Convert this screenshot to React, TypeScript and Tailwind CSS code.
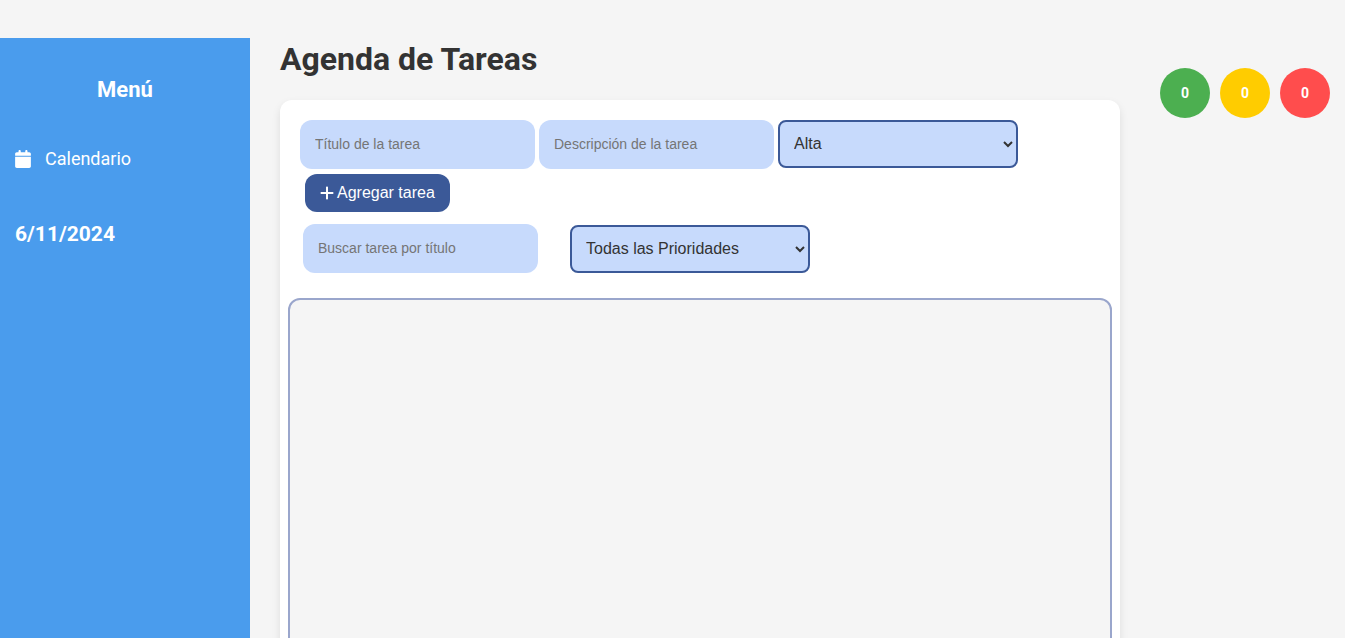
import { useState } from "react";
import { FaPlus } from "react-icons/fa6";

const fieldClass =
  "h-[49px] w-[235px] rounded-xl bg-[#c7dafc] px-[15px] pb-0.5 text-sm text-[#333] placeholder:text-[#757575] outline-none";
const selectClass =
  "h-12 w-60 rounded-lg border-2 border-[#3b5998] bg-[#c7dafc] px-2.5 pb-px text-base text-[#333] outline-none";

const counters = [
  { label: "Prioridad baja", color: "bg-[#4caf50]", count: 0 },
  { label: "Prioridad media", color: "bg-[#ffcc00]", count: 0 },
  { label: "Prioridad alta", color: "bg-[#ff4d4d]", count: 0 },
];

function CalendarIcon() {
  return (
    <svg viewBox="0 0 448 512" className="h-[18px] w-4 shrink-0" fill="currentColor" aria-hidden="true">
      <path d="M96 32C96 14.33 110.3 0 128 0s32 14.33 32 32v32h128V32c0-17.67 14.3-32 32-32s32 14.33 32 32v32h48c26.5 0 48 21.49 48 48v48H0v-48c0-26.51 21.49-48 48-48h48V32zM448 464c0 26.5-21.5 48-48 48H48c-26.51 0-48-21.5-48-48V192h448v272z" />
    </svg>
  );
}

function Sidebar() {
  return (
    <aside className="w-[250px] shrink-0 bg-[#4a9ced] px-[15px] pt-9 text-white">
      <h2 className="text-center text-[22px] leading-8 font-bold">Menú</h2>
      <nav className="mt-10">
        <a href="#calendario" className="flex items-center gap-3.5 text-lg leading-[26px]">
          <CalendarIcon />
          Calendario
        </a>
      </nav>
      <p className="mt-[46px] text-[21px] leading-8 font-bold">6/11/2024</p>
    </aside>
  );
}

export default function App() {
  const [title, setTitle] = useState("");
  const [description, setDescription] = useState("");
  const [search, setSearch] = useState("");

  return (
    <div className="flex h-screen overflow-hidden bg-[#f5f5f5] pt-[38px] font-['Roboto',sans-serif]">
      <Sidebar />
      <main className="min-w-0 flex-1 px-[30px]">
        <h1 className="text-[32px] leading-[42px] font-bold text-[#333]">Agenda de Tareas</h1>
        <section className="mt-5 rounded-xl bg-white px-2 pt-5 pb-5 font-['Liberation_Sans',sans-serif] shadow-[0_4px_8px_rgba(0,0,0,0.1)]">
          <form className="flex flex-wrap gap-x-1 gap-y-[5px] px-3" onSubmit={(e) => e.preventDefault()}>
            <input
              type="text"
              aria-label="Título de la tarea"
              placeholder="Título de la tarea"
              className={fieldClass}
              value={title}
              onChange={(e) => setTitle(e.target.value)}
            />
            <input
              type="text"
              aria-label="Descripción de la tarea"
              placeholder="Descripción de la tarea"
              className={fieldClass}
              value={description}
              onChange={(e) => setDescription(e.target.value)}
            />
            <select aria-label="Prioridad" className={selectClass}>
              <option>Alta</option>
              <option>Media</option>
              <option>Baja</option>
            </select>
            <div className="w-full px-[5px]">
              <button
                type="submit"
                className="flex h-[38px] items-center gap-[3px] rounded-xl bg-[#3b5998] px-[15px] text-base text-white"
              >
                <FaPlus className="h-4 w-3.5" aria-hidden="true" />
                Agregar tarea
              </button>
            </div>
          </form>
          <div className="mt-3 flex flex-wrap items-end gap-x-8 px-[15px]">
            <input
              type="text"
              aria-label="Buscar tarea por título"
              placeholder="Buscar tarea por título"
              className={fieldClass}
              value={search}
              onChange={(e) => setSearch(e.target.value)}
            />
            <select aria-label="Filtrar por prioridad" className={selectClass}>
              <option>Todas las Prioridades</option>
              <option>Alta</option>
              <option>Media</option>
              <option>Baja</option>
            </select>
          </div>
          <ul className="mt-[25px] min-h-[400px] rounded-xl border-2 border-[#9aa6cc] bg-[#f5f5f5]" />
        </section>
      </main>
      <div className="flex shrink-0 gap-2.5 pt-[30px] pr-[15px] pl-2.5">
        {counters.map((c) => (
          <span
            key={c.label}
            aria-label={c.label}
            className={`flex size-[50px] items-center justify-center rounded-full text-sm font-bold text-white ${c.color}`}
          >
            {c.count}
          </span>
        ))}
      </div>
    </div>
  );
}
